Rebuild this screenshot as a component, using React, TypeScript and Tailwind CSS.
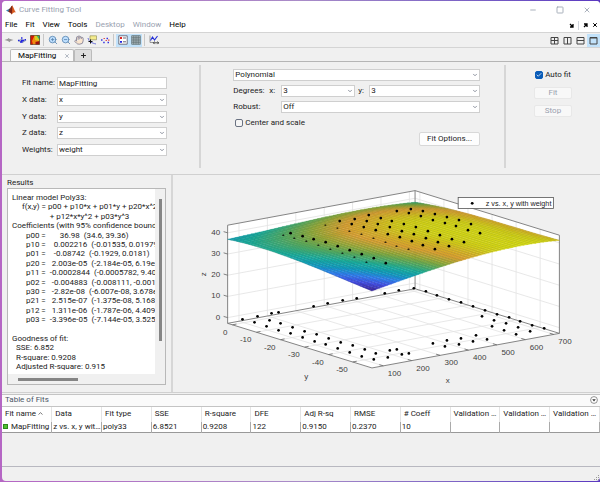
import type { ReactNode } from 'react';
import { Check, ChevronDown, Hand, Minus, Plus, Square, X, ZoomIn, ZoomOut } from 'lucide-react';

const MENUS = ['File', 'Fit', 'View', 'Tools', 'Desktop', 'Window', 'Help'];
const DISABLED_MENUS = ['Desktop', 'Window'];

const RESULTS = [
  'Linear model Poly33:',
  '     f(x,y) = p00 + p10*x + p01*y + p20*x^2 + p11*x*y + p02*y^2',
  '                   + p12*x*y^2 + p03*y^3',
  'Coefficients (with 95% confidence bounds):',
  '       p00 =       36.98  (34.6, 39.36)',
  '       p10 =    0.002216  (-0.01535, 0.01979)',
  '       p01 =    -0.08742  (-0.1929, 0.0181)',
  '       p20 =   2.003e-05  (-2.184e-05, 6.19e-05)',
  '       p11 =  -0.0002844  (-0.0005782, 9.404e-06)',
  '       p02 =   -0.004883  (-0.008111, -0.001655)',
  '       p30 =   -2.82e-08  (-6.007e-08, 3.678e-09)',
  '       p21 =   2.515e-07  (-1.375e-08, 5.168e-07)',
  '       p12 =   1.311e-06  (-1.787e-06, 4.409e-06)',
  '       p03 =  -3.396e-05  (-7.144e-05, 3.525e-06)',
  '',
  'Goodness of fit:',
  '  SSE: 6.852',
  '  R-square: 0.9208',
  '  Adjusted R-square: 0.915',
];

const COLUMNS: [string, string][] = [
  ['Fit name', 'MapFitting'],
  ['Data', 'z vs. x, y with weight'],
  ['Fit type', 'poly33'],
  ['SSE', '6.8521'],
  ['R-square', '0.9208'],
  ['DFE', '122'],
  ['Adj R-sq', '0.9150'],
  ['RMSE', '0.2370'],
  ['# Coeff', '10'],
  ['Validation Data', ''],
  ['Validation SSE', ''],
  ['Validation RMSE', ''],
];

// ---- surface plot ----

type Point = [number, number];

const X_RANGE = [60, 720];
const Y_RANGE = [2, -58];
const Z_SCALE = 2.115;
const Z_MIN = -2.7;
const Z_MAX = 43.6;

function fit(x: number, y: number) {
  return (
    36.98 + 0.002216 * x - 0.08742 * y + 2.003e-5 * x * x - 0.0002844 * x * y - 0.004883 * y * y
    - 2.82e-8 * x ** 3 + 2.515e-7 * x * x * y + 1.311e-6 * x * y * y - 3.396e-5 * y ** 3
  );
}

function project(x: number, y: number, z: number): Point {
  const u = (x - X_RANGE[0]) / (X_RANGE[1] - X_RANGE[0]);
  const v = (y - Y_RANGE[0]) / (Y_RANGE[1] - Y_RANGE[0]);
  return [228.5 + 187 * u + 144 * v, 323 - 34.5 * u + 44.5 * v - (z - Z_MIN) * Z_SCALE];
}

const STOPS: [number, number[]][] = [
  [0, [58, 36, 150]],
  [0.14, [64, 76, 226]],
  [0.26, [44, 126, 236]],
  [0.36, [14, 152, 190]],
  [0.48, [22, 172, 156]],
  [0.6, [84, 170, 92]],
  [0.7, [150, 168, 52]],
  [0.8, [218, 160, 48]],
  [0.87, [214, 178, 36]],
  [0.94, [210, 208, 20]],
  [1, [216, 222, 18]],
];

function colorAt(t: number) {
  const i = Math.max(1, STOPS.findIndex(([s]) => s >= t));
  const [a, ca] = STOPS[i - 1];
  const [b, cb] = STOPS[i];
  const k = Math.min(1, Math.max(0, (t - a) / (b - a)));
  return `rgb(${ca.map((c, n) => Math.round(c + (cb[n] - c) * k)).join(',')})`;
}

const N = 48;
const gx = (i: number) => X_RANGE[0] + ((X_RANGE[1] - X_RANGE[0]) * i) / N;
const gy = (j: number) => Y_RANGE[0] + ((Y_RANGE[1] - Y_RANGE[0]) * j) / N;
const onSurface = (i: number, j: number) => project(gx(i), gy(j), fit(gx(i), gy(j)));

const heights: number[] = [];
for (let i = 0; i <= N; i++) for (let j = 0; j <= N; j++) heights.push(fit(gx(i), gy(j)));
const LOW = Math.min(...heights);
const HIGH = Math.max(...heights);

const cells: { points: string; color: string }[] = [];
for (let i = N - 1; i >= 0; i--) {
  for (let j = 0; j < N; j++) {
    const z = fit(gx(i + 0.5), gy(j + 0.5));
    cells.push({
      points: [onSurface(i, j), onSurface(i + 1, j), onSurface(i + 1, j + 1), onSurface(i, j + 1)].join(' '),
      color: colorAt((z - LOW) / (HIGH - LOW)),
    });
  }
}

const meshLines = Array.from({ length: N + 1 }, (_, i) =>
  Array.from({ length: N + 1 }, (_, j) => onSurface(i, j)).join(' '),
);

const X_TICKS = [100, 200, 300, 400, 500, 600, 700];
const Y_TICKS = [0, -10, -20, -30, -40, -50];
const Z_TICKS = [0, 10, 20, 30, 40];

const [X0, X1] = X_RANGE;
const [Y0, Y1] = Y_RANGE;

const gridLines: Point[][] = [
  ...X_TICKS.map((x) => [project(x, Y1, Z_MIN), project(x, Y0, Z_MIN), project(x, Y0, Z_MAX)]),
  ...Y_TICKS.map((y) => [project(X0, y, Z_MIN), project(X1, y, Z_MIN), project(X1, y, Z_MAX)]),
  ...Z_TICKS.map((z) => [project(X0, Y0, z), project(X1, Y0, z), project(X1, Y1, z)]),
];

const FLOOR_DOTS: Point[] = [
  [243, 319], [258, 316], [272, 313], [279, 312], [255, 322], [270, 320], [267, 326], [281, 323], [279, 330],
  [293, 327], [291, 333], [305, 331], [303, 337], [317, 334], [315, 341], [329, 338], [326, 344], [341, 342],
  [338, 348], [353, 345], [350, 352], [365, 349], [362, 356], [376, 353], [374, 359], [390, 350], [388, 357],
  [397, 349], [314, 306], [328, 303], [343, 300], [357, 298], [385, 293], [399, 290], [414, 288], [426, 291],
  [437, 295], [449, 299], [461, 302], [473, 306], [485, 310], [497, 314], [509, 317], [520, 321], [532, 325],
  [544, 328], [482, 316], [494, 320], [506, 323], [518, 327], [530, 331], [492, 326], [504, 330], [516, 334],
  [476, 335], [487, 339], [461, 338], [473, 341], [447, 340], [459, 344], [433, 343], [445, 346], [402, 354],
  [409, 353],
];

const SURFACE_DOTS: Point[] = [
  [291, 233], [303, 236], [314, 239], [326, 242], [338, 246], [350, 250], [362, 254], [374, 258], [386, 263],
  [340, 221], [352, 224], [364, 227], [376, 230], [388, 234], [400, 237], [355, 219], [367, 221], [378, 224],
  [390, 227], [369, 215], [381, 218], [392, 221], [397, 211], [411, 209], [423, 211], [435, 214], [447, 217],
  [459, 220], [471, 224], [480, 233], [409, 213], [421, 216], [433, 220], [445, 223], [456, 226], [468, 230],
  [464, 242], [404, 224], [416, 227], [428, 231], [440, 235], [452, 239], [402, 231], [414, 234], [426, 238],
  [438, 242], [449, 246], [412, 241], [423, 245], [435, 249],
];

// points that lie mostly under the surface
const HIDDEN_DOTS: Point[] = [
  [284, 235], [295, 238], [307, 241], [319, 245], [331, 249], [343, 253], [355, 257], [367, 262], [326, 225],
  [338, 228], [350, 231], [362, 234], [374, 238], [386, 242], [397, 246], [409, 249],
];

function SurfacePlot() {
  const box = [
    [project(X0, Y0, Z_MIN), project(X0, Y0, Z_MAX), project(X1, Y0, Z_MAX), project(X1, Y1, Z_MAX), project(X1, Y1, Z_MIN), project(X0, Y1, Z_MIN), project(X0, Y0, Z_MIN)],
    [project(X0, Y0, Z_MIN), project(X1, Y0, Z_MIN), project(X1, Y1, Z_MIN)],
    [project(X1, Y0, Z_MIN), project(X1, Y0, Z_MAX)],
  ];
  return (
    <svg viewBox="174 175 426 216" className="block w-full" role="img" aria-label="z vs. x, y with weight">
      <polygon points={box[0].join(' ')} fill="#fff" />
      <g fill="none" stroke="#e2e2e2" strokeWidth="0.8">
        {gridLines.map((l, i) => <polyline key={i} points={l.join(' ')} />)}
      </g>
      <g fill="none" stroke="#777" strokeWidth="0.9">
        {box.map((l, i) => <polyline key={i} points={l.join(' ')} />)}
      </g>
      <g stroke="#666" strokeWidth="0.8">
        {X_TICKS.map((x) => {
          const [px, py] = project(x, Y1, Z_MIN);
          return <line key={x} x1={px} y1={py} x2={px - 4} y2={py - 1.2} />;
        })}
        {Y_TICKS.map((y) => {
          const [px, py] = project(X0, y, Z_MIN);
          return <line key={y} x1={px} y1={py} x2={px + 4} y2={py - 0.8} />;
        })}
        {Z_TICKS.map((z) => {
          const [px, py] = project(X0, Y0, z);
          return <line key={z} x1={px} y1={py} x2={px - 4} y2={py - 1.2} />;
        })}
      </g>
      {cells.map((c, i) => (
        <polygon key={i} points={c.points} fill={c.color} stroke={c.color} strokeWidth="0.4" />
      ))}
      <g fill="none" stroke="#000" strokeOpacity="0.28" strokeWidth="0.4">
        {meshLines.map((l, i) => <polyline key={i} points={l} />)}
      </g>
      {[...FLOOR_DOTS, ...SURFACE_DOTS].map(([x, y], i) => <circle key={i} cx={x + 0.3} cy={y} r="1.35" />)}
      {HIDDEN_DOTS.map(([x, y], i) => <ellipse key={i} cx={x} cy={y} rx="1.1" ry="0.6" />)}
      <g fill="#404040" fontSize="8" fontFamily="'Liberation Sans', Arial, sans-serif">
        {Z_TICKS.map((z) => {
          const [px, py] = project(X0, Y0, z);
          return <text key={z} x={px - 7.5} y={py + 2} textAnchor="end">{z}</text>;
        })}
        {Y_TICKS.map((y) => {
          const [px, py] = project(X0, y, Z_MIN);
          return <text key={y} x={px - 5} y={py + 10} textAnchor="end">{y}</text>;
        })}
        {X_TICKS.map((x) => {
          const [px, py] = project(x, Y1, Z_MIN);
          return <text key={x} x={px + 4.5} y={py + 10}>{x}</text>;
        })}
        <text x="305" y="379">y</text>
        <text x="446" y="383">x</text>
        <text transform="translate(207 276) rotate(-90)">z</text>
      </g>
      <rect x="458.5" y="197.5" width="95" height="11" fill="#fff" stroke="#555" strokeWidth="0.8" />
      <circle cx="472.5" cy="203.3" r="1.4" />
      <text x="486" y="206" fontSize="7.2" fill="#222" fontFamily="'Liberation Sans', Arial, sans-serif">z vs. x, y with weight</text>
    </svg>
  );
}

// ---- controls ----

function Select({ id, value, label, className = '' }: { id: string; value: string; label?: string; className?: string }) {
  return (
    <div className={`relative ${className}`}>
      <select
        id={id}
        aria-label={label}
        defaultValue={value}
        className="block h-3 w-full appearance-none border border-[#cfcfcf] bg-white px-px text-[8px] leading-[10px] outline-none"
      >
        <option>{value}</option>
      </select>
      <ChevronDown size={6} strokeWidth={3} className="pointer-events-none absolute top-[3px] right-[2px] text-gray-500" />
    </div>
  );
}

function CheckBox({ id, label, checked }: { id: string; label: string; checked?: boolean }) {
  return (
    <div className="flex items-center gap-0.5">
      <span className="relative flex">
        <input
          id={id}
          type="checkbox"
          defaultChecked={checked}
          className="peer block size-2 appearance-none rounded-[2px] border border-gray-500 bg-[#f5f5f5] checked:border-[#0a5cb8] checked:bg-[#0a5cb8]"
        />
        <Check size={6} strokeWidth={3} className="pointer-events-none absolute top-px left-px hidden text-white peer-checked:block" />
      </span>
      <label htmlFor={id}>{label}</label>
    </div>
  );
}

function ToolButton({ label, active, children }: { label: string; active?: boolean; children: ReactNode }) {
  return (
    <button aria-label={label} className={`flex h-[13px] w-[13px] items-center justify-center ${active ? 'bg-[#c2e2fa]' : ''}`}>
      {children}
    </button>
  );
}

function LayoutIcon({ d }: { d: string }) {
  return (
    <svg viewBox="0 0 9 9" className="size-[9px]" fill="none" stroke="#444">
      <path d={`M1 1.5h7v6.5H1z${d}`} />
    </svg>
  );
}

function Toolbar() {
  return (
    <div className="flex h-4 items-center border-y border-[#d4d4d4] bg-[#f0f0f0]">
      <ToolButton label="New fit">
        <svg viewBox="0 0 10 8" className="h-2 w-2.5">
          <path d="M.5 4 4 2.800V2l1.500.8L9.500 4 6.500 5l-1 1.200L4 5z" fill="#999" />
        </svg>
      </ToolButton>
      <ToolButton label="Duplicate fit">
        <svg viewBox="0 0 10 8" className="h-2 w-2.5">
          <path d="M.5 4.800 4 3l5.500 1.600L5.500 7z" fill="#9ab" />
          <path d="M1 4.500h1.500M4 2h1.500M4 4.500h3M3 6h2.500M7.500 3.800h1.500" stroke="#2424e0" strokeWidth="1.4" />
        </svg>
      </ToolButton>
      <ToolButton label="Print to figure">
        <svg viewBox="0 0 10 10" className="size-2.5">
          <path d="M.5.5h9v9h-9z" fill="#f08a10" />
          <path d="M.5.5h4L2 6l1 3.500H.5z" fill="#d01808" />
          <path d="M4.500.5h5V6L5 5z" fill="#d8d020" />
          <path d="M6.500.5h3V5z" fill="#30b070" />
          <path d="M5.500 9.500V7l4-1v3.500z" fill="#a01010" />
          <path d="M.5.5h9v9h-9z" fill="none" stroke="#432" strokeWidth=".6" />
        </svg>
      </ToolButton>
      <div className="mx-0.5 h-3 w-px bg-[#c8c8c8]" />
      <ToolButton label="Zoom in"><ZoomIn size={10} strokeWidth={2} className="fill-[#bfe0ff] text-[#5a86b0]" /></ToolButton>
      <ToolButton label="Zoom out"><ZoomOut size={10} strokeWidth={2} className="fill-[#bfe0ff] text-[#5a86b0]" /></ToolButton>
      <ToolButton label="Pan"><Hand size={10} strokeWidth={2} className="fill-[#fbe6cf] text-[#7d7d96]" /></ToolButton>
      <ToolButton label="Data cursor">
        <svg viewBox="0 0 10 10" className="size-2.5">
          <path d="M3 .8h6.500v4H3z" fill="#f5ec8c" stroke="#8a8650" strokeWidth=".6" />
          <path d="M1 3c1 4 4 5 8 6" fill="none" stroke="#4a50d0" strokeWidth=".8" />
          <path d="M3.500 4.500v4M1.500 6.500h4" stroke="#111" strokeWidth="1" />
        </svg>
      </ToolButton>
      <ToolButton label="Exclude outliers">
        <svg viewBox="0 0 10 10" className="size-2.5">
          <path d="M1 5h1.500M3.200 7.500h1.500M6.500 3.500H8M7.500 7.500H9" stroke="#3434e0" strokeWidth="1.4" />
          <path d="M3.500 3.500H5M5.500 5.500H7M8 5.200h1.500" stroke="#e05050" strokeWidth="1.2" />
        </svg>
      </ToolButton>
      <div className="mx-0.5 h-3 w-px bg-[#c8c8c8]" />
      <ToolButton label="Legend" active>
        <svg viewBox="0 0 10 10" className="size-2.5">
          <path d="M.8.8h8.400v8.400H.8z" fill="#fff" stroke="#556" strokeWidth=".8" />
          <path d="M2 3h2" stroke="#d22" strokeWidth="1.800" />
          <path d="M2 6.800h2" stroke="#22d" strokeWidth="1.800" />
          <path d="M5 3h3M5 6.800h3" stroke="#556" strokeWidth=".9" />
        </svg>
      </ToolButton>
      <ToolButton label="Grid" active>
        <svg viewBox="0 0 10 10" className="size-2.5" fill="#b8c4cc" stroke="#566" strokeWidth=".7">
          <path d="M.7.700h8.600v8.600H.7zM2.800.7v8.600M5 .7v8.600M7.200.7v8.600M.7 2.800h8.600M.7 5h8.600M.7 7.200h8.600" />
        </svg>
      </ToolButton>
      <div className="mx-0.5 h-3 w-px bg-[#c8c8c8]" />
      <ToolButton label="Adjust axes limits">
        <svg viewBox="0 0 10 10" className="size-2.5" fill="none">
          <path d="M1 .5v7h3" stroke="#777" strokeWidth=".7" />
          <path d="M1.500 5.500 3.500 2l2 3L8.500 1" stroke="#2430d8" strokeWidth="1.100" />
          <path d="M4.500 7.800h5M5.500 6.500 4.300 7.800l1.200 1.300M8.500 6.500l1.200 1.300-1.200 1.300" stroke="#222" strokeWidth=".8" />
        </svg>
      </ToolButton>
      <div className="ml-auto flex items-center">
        <ToolButton label="Tile"><LayoutIcon d="M4.500 1.500v6.500M1 4.500h7" /></ToolButton>
        <ToolButton label="Left/right tile"><LayoutIcon d="M4.500 1.500v6.500" /></ToolButton>
        <ToolButton label="Top/bottom tile"><LayoutIcon d="M1 4.500h7" /></ToolButton>
        <ToolButton label="Maximize" active><LayoutIcon d="M1 2h7" /></ToolButton>
      </div>
    </div>
  );
}

function FitSettings() {
  return (
    <div className="flex border-t border-[#b5b5b5] pt-[3px] pb-[6px]">
      <div className="w-1/3 border-r-2 border-[#d6d6d6] pt-3 pr-8 pb-3 pl-5">
        <div className="flex h-[79px] flex-col justify-between">
          <div className="flex items-center">
            <label htmlFor="fit-name" className="w-[35px] shrink-0">Fit name:</label>
            <input
              id="fit-name"
              defaultValue="MapFitting"
              className="h-3 min-w-0 flex-1 border border-[#cfcfcf] bg-white px-px text-[8px] leading-[10px] outline-none"
            />
          </div>
          {[['X data:', 'x'], ['Y data:', 'y'], ['Z data:', 'z'], ['Weights:', 'weight']].map(([label, value]) => (
            <div key={label} className="flex items-center">
              <label htmlFor={`data-${value}`} className="w-[35px] shrink-0">{label}</label>
              <Select id={`data-${value}`} value={value} className="flex-1" />
            </div>
          ))}
        </div>
      </div>
      <div className="flex flex-1 flex-col gap-1 border-r-2 border-[#d6d6d6] pt-1 pr-6 pl-8">
        <Select id="model" label="Fit type" value="Polynomial" />
        <div className="flex items-center">
          <span className="w-9">Degrees:</span>
          <label htmlFor="deg-x" className="w-3">x:</label>
          <Select id="deg-x" value="3" className="w-[74px]" />
          <label htmlFor="deg-y" className="w-[14px] pl-[3px]">y:</label>
          <Select id="deg-y" value="3" className="flex-1" />
        </div>
        <div className="flex items-center">
          <label htmlFor="robust" className="w-12">Robust:</label>
          <Select id="robust" value="Off" className="flex-1" />
        </div>
        <div className="flex pt-px pl-0.5"><CheckBox id="center" label="Center and scale" /></div>
        <button className="h-[14px] self-end rounded-[2px] border border-[#d8d8d8] bg-[#fdfdfd] px-[7px] leading-3">Fit Options...</button>
      </div>
      <div className="flex w-[94px] flex-col items-center gap-1 pt-[5px]">
        <CheckBox id="auto-fit" label="Auto fit" checked />
        <button disabled className="mt-[3px] h-3 w-[38px] rounded-[2px] border border-[#e8e8e8] bg-[#f8f8f8] leading-[10px] text-gray-400">Fit</button>
        <button disabled className="mt-0.5 h-3 w-[38px] rounded-[2px] border border-[#e8e8e8] bg-[#f8f8f8] leading-[10px] text-gray-400">Stop</button>
      </div>
    </div>
  );
}

function ResultsPanel() {
  return (
    <section className="flex w-[171px] shrink-0 flex-col border-r-2 border-[#d6d6d6] pt-[3px] pr-[5px] pb-[7px] pl-[5px]">
      <h2 className="h-[10px] leading-[10px]">Results</h2>
      <div className="flex flex-1 flex-col border border-[#b8b8b8]">
        <div className="flex flex-1">
          <div className="grid min-w-0 flex-1 auto-rows-fr overflow-hidden bg-white pt-1 pb-0.5 pl-1">
            {RESULTS.map((line, i) => <div key={i} className="h-[9px] leading-[9px] whitespace-pre">{line}</div>)}
          </div>
          <div className="w-[10px] pt-[10px] pl-[4px]">
            <div className="h-[142px] w-[3px] bg-[#858585]" />
          </div>
        </div>
        <div className="h-[10px] pt-[4px] pl-[10px]">
          <div className="h-[3px] w-[60px] bg-[#858585]" />
        </div>
      </div>
    </section>
  );
}

function FitsTable() {
  return (
    <section className="flex flex-1 flex-col">
      <div className="flex h-[13px] items-center justify-between border-y border-[#c4c4c4] bg-[#fafafa] pr-0.5 pl-[3px] text-gray-600">
        <h2>Table of Fits</h2>
        <button aria-label="Table options">
          <svg viewBox="0 0 8 8" className="size-2">
            <circle cx="4" cy="4" r="3.400" fill="#fff" stroke="#666" strokeWidth=".7" />
            <path d="M2.200 3.200h3.600L4 5.500z" fill="#333" />
          </svg>
        </button>
      </div>
      <div className="flex-1 border-b border-[#b8b8c0]">
        <table className="w-full table-fixed border-collapse text-left">
          <thead>
            <tr className="h-[15px] bg-white">
              {COLUMNS.map(([name]) => (
                <th key={name} className="truncate border-r border-[#e4e4e4] pl-[3px] font-normal">
                  {name}
                  {name === 'Fit name' && (
                    <svg viewBox="0 0 5 3" className="ml-0.5 inline-block h-[3px] w-[5px] align-middle" fill="none" stroke="#555" strokeWidth=".8">
                      <path d="M.5 2.500 2.500.7l2 1.800" />
                    </svg>
                  )}
                </th>
              ))}
            </tr>
          </thead>
          <tbody>
            <tr className="h-[11px] border-b border-[#999] bg-white leading-[10px]">
              {COLUMNS.map(([name, value], i) => (
                <td key={name} className="truncate border-r border-[#aaa] pl-px">
                  {i === 0 && <span className="mr-[3px] inline-block size-[5px] border border-[#2d8a1c] bg-[#4fbf30]" />}
                  {value}
                </td>
              ))}
            </tr>
          </tbody>
        </table>
      </div>
      <div className="flex h-[14px] items-end justify-end">
        <svg viewBox="0 0 6 6" className="size-1.5" fill="#999"><path d="M4 0h1v1H4zM2 2h1v1H2zM4 2h1v1H4zM0 4h1v1H0zM2 4h1v1H2zM4 4h1v1H4z" /></svg>
      </div>
    </section>
  );
}

export default function App() {
  return (
    <div className="flex min-h-screen flex-col bg-linear-to-r from-[#b566c4] via-[#a98cc8] to-[#5b38c0] pt-px pb-px pl-[2px] font-[Roboto,'Noto_Sans',sans-serif] text-[8px] leading-[10px] text-[#222]">
      <div className="flex flex-1 flex-col overflow-hidden rounded-[4px] bg-[#f0f0f0]">
        <header className="flex h-[17px] items-center bg-white pl-1 text-gray-400">
          <svg viewBox="0 0 10 10" className="size-2.5">
            <path d="M0 5.500 3 4l1 1.500L2.500 7z" fill="#3b7fb0" />
            <path d="M3 4c1.500-.5 2-3 3.200-3.500L5 6 2.500 7z" fill="#5a3030" />
            <path d="M6.200.5C7.500 2 8.500 6 10 7.500 8 6.500 7 8 5.500 9.500 5 8 4 7 2.500 7 4.500 5.500 5 1.500 6.200.5z" fill="#d85a20" />
            <path d="M6.200.5C6 4 6.500 7 5.500 9.500 5 8 4 7 2.500 7 4.500 5.500 5 1.500 6.200.5z" fill="#7a2418" />
          </svg>
          <h1 className="pl-[3px]">Curve Fitting Tool</h1>
          <div className="ml-auto flex items-center gap-[19px] pr-[9px]">
            <button aria-label="Minimize"><Minus size={8} strokeWidth={2.5} /></button>
            <button aria-label="Maximize window"><Square size={8} strokeWidth={2.5} /></button>
            <button aria-label="Close window"><X size={8} strokeWidth={2.5} /></button>
          </div>
        </header>
        <nav className="flex h-[14px] items-center gap-2 bg-white pl-[3px]">
          {MENUS.map((m) => (
            <button key={m} className={DISABLED_MENUS.includes(m) ? 'text-gray-400' : 'text-black'}>{m}</button>
          ))}
          <div className="ml-auto flex items-center gap-1 pr-0.5 text-black">
            <button aria-label="Dock">
              <svg viewBox="0 0 5 5" className="size-[5px]"><path d="M1 1l3 3M4 1v3H1" fill="none" stroke="currentColor" strokeWidth="1.300" /></svg>
            </button>
            <div className="h-[9px] w-px bg-gray-300" />
            <button aria-label="Undock">
              <svg viewBox="0 0 5 5" className="size-[5px]"><path d="M1 4l3-3M1 1h3v3" fill="none" stroke="currentColor" strokeWidth="1.300" /></svg>
            </button>
            <button aria-label="Close tool"><X size={6} strokeWidth={4} /></button>
          </div>
        </nav>
        <Toolbar />
        <div className="flex h-[13px] items-end pl-2">
          <button className="flex h-3 items-center gap-2 rounded-t-[2px] border border-b-0 border-[#bbb] bg-[#fafafa] pr-[3px] pl-[7px] text-black">
            MapFitting <X size={6} strokeWidth={3} className="text-gray-400" />
          </button>
          <button aria-label="New tab" className="flex h-3 w-[18px] items-center justify-center rounded-t-[2px] border border-b-0 border-[#bbb] bg-[#dedede]">
            <Plus size={7} strokeWidth={3.500} />
          </button>
        </div>
        <FitSettings />
        <main className="flex border-y border-[#d0d0d0]">
          <ResultsPanel />
          <div className="min-w-0 flex-1"><SurfacePlot /></div>
        </main>
        <div className="h-px" />
        <FitsTable />
      </div>
    </div>
  );
}
